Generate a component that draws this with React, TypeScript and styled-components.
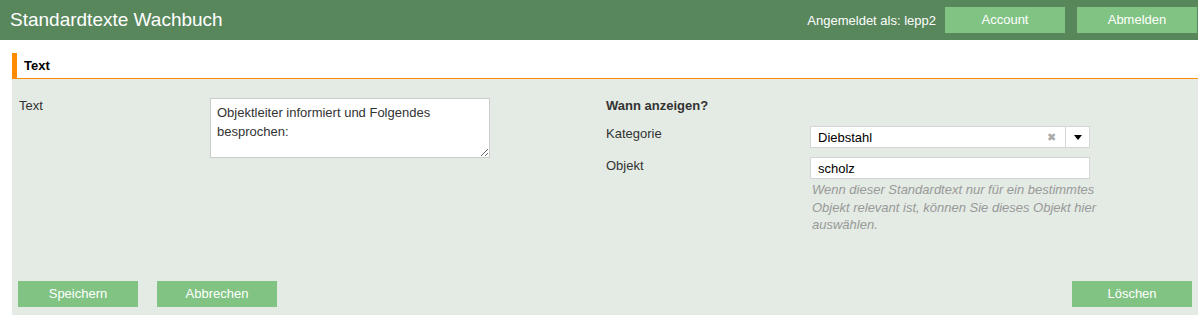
import React from "react";
import styled, { createGlobalStyle } from "styled-components";

const GlobalStyle = createGlobalStyle`
  html, body { margin: 0; padding: 0; background: #fff; }
  body { font-family: "Liberation Sans", Arial, sans-serif; font-size: 13px; color: #333; overflow: hidden; }
  * { box-sizing: border-box; }
`;

const Page = styled.div`
  display: flex;
  flex-direction: column;
  height: 315px;
`;

const Header = styled.header`
  display: flex;
  align-items: center;
  height: 40px;
  padding: 0 1px 0 10px;
  background: #58875c;
  color: #fff;
`;

const Title = styled.h1`
  flex: 1;
  margin: 0;
  font-size: 19px;
  font-weight: normal;
  line-height: 24px;
`;

const UserInfo = styled.span`
  margin-right: 9px;
  font-size: 13px;
`;

const Button = styled.button<{ $gap?: number }>`
  width: 120px;
  height: 26px;
  border: 0;
  padding: 0;
  margin-left: ${(p) => p.$gap ?? 0}px;
  background: #80c383;
  color: #fff;
  font-family: "Liberation Sans", Arial, sans-serif;
  font-size: 13px;
  line-height: 24px;
  cursor: pointer;
`;

const Main = styled.main`
  flex: 1;
  display: flex;
  flex-direction: column;
  padding: 13px 0 0 12px;
`;

const SectionHeader = styled.div`
  height: 26px;
  display: flex;
  align-items: center;
  padding-left: 7px;
  border-left: 5px solid #ff8c00;
  border-bottom: 1px solid #ff8c00;
  font-weight: bold;
  color: #000;
`;

const Panel = styled.section`
  flex: 1;
  display: flex;
  flex-direction: column;
  justify-content: space-between;
  background: #e3ebe4;
  padding: 19px 6px 8px 6px;
`;

const Columns = styled.div`
  display: flex;
`;

const Column = styled.div<{ $width: number; $label: number; $inset?: number }>`
  width: ${(p) => p.$width}px;
  padding-left: ${(p) => p.$inset ?? 0}px;
  display: grid;
  grid-template-columns: ${(p) => p.$label}px 280px;
  align-content: start;
  align-items: start;
`;

const Label = styled.label<{ $top?: number }>`
  line-height: 16px;
  padding-top: ${(p) => p.$top ?? 0}px;
`;

const Heading = styled.div`
  grid-column: 1 / 3;
  font-weight: bold;
  line-height: 16px;
  margin-bottom: 12px;
`;

const TextArea = styled.textarea`
  width: 280px;
  height: 60px;
  border: 1px solid #ccc;
  padding: 4px 6px;
  font-family: "Liberation Sans", Arial, sans-serif;
  font-size: 13px;
  line-height: 19px;
  color: #333;
  resize: vertical;
  background: #fff;
`;

const Select = styled.div`
  display: flex;
  align-items: center;
  height: 22px;
  border: 1px solid #d5d5d5;
  background: #fff;
  color: #000;
  margin-bottom: 9px;
`;

const SelectValue = styled.span`
  flex: 1;
  padding-left: 7px;
`;

const Clear = styled.span`
  width: 16px;
  color: #aaa;
  font-size: 11px;
  text-align: center;
  margin-right: 6px;
`;

const Arrow = styled.span`
  width: 24px;
  height: 100%;
  border-left: 1px solid #d5d5d5;
  display: flex;
  align-items: center;
  justify-content: center;
  &::after {
    content: "";
    border-left: 4px solid transparent;
    border-right: 4px solid transparent;
    border-top: 5px solid #000;
  }
`;

const Input = styled.input`
  width: 280px;
  height: 22px;
  border: 1px solid #d5d5d5;
  padding: 0 7px;
  font-family: "Liberation Sans", Arial, sans-serif;
  font-size: 13px;
  color: #000;
  background: #fff;
`;

const Help = styled.p`
  grid-column: 2;
  margin: 2px -12px 0 2px;
  font-style: italic;
  color: #999;
  line-height: 17.5px;
`;

const Actions = styled.div`
  display: flex;
  align-items: center;
`;

const Spacer = styled.div`
  flex: 1;
`;

export default function App() {
  return (
    <>
      <GlobalStyle />
      <Page>
        <Header>
          <Title>Standardtexte Wachbuch</Title>
          <UserInfo>Angemeldet als: lepp2</UserInfo>
          <Button>Account</Button>
          <Button $gap={12}>Abmelden</Button>
        </Header>
        <Main>
          <SectionHeader>Text</SectionHeader>
          <Panel>
            <Columns>
              <Column $width={588} $label={191} $inset={1}>
                <Label>Text</Label>
                <TextArea defaultValue={"Objektleiter informiert und Folgendes besprochen:"} />
              </Column>
              <Column $width={490} $label={204}>
                <Heading>Wann anzeigen?</Heading>
                <Label>Kategorie</Label>
                <Select>
                  <SelectValue>Diebstahl</SelectValue>
                  <Clear>✖</Clear>
                  <Arrow />
                </Select>
                <Label $top={1}>Objekt</Label>
                <Input defaultValue="scholz" />
                <Help>
                  Wenn dieser Standardtext nur für ein bestimmtes Objekt relevant ist, können Sie dieses Objekt hier auswählen.
                </Help>
              </Column>
            </Columns>
            <Actions>
              <Button>Speichern</Button>
              <Button $gap={19}>Abbrechen</Button>
              <Spacer />
              <Button>Löschen</Button>
            </Actions>
          </Panel>
        </Main>
      </Page>
    </>
  );
}
